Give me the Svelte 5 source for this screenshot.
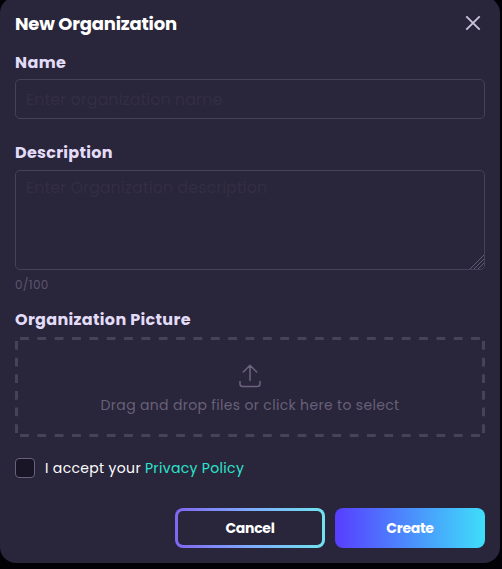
<script>
  let name = $state('');
  let description = $state('');
  let accepted = $state(false);
</script>

<main>
  <form class="modal" onsubmit={(e) => e.preventDefault()}>
    <header>
      <h1>New Organization</h1>
      <button class="close" type="button" aria-label="Close">
        <svg width="16" height="16" viewBox="0 0 16 16"><path d="M1.3 1.3 14.7 14.7M14.7 1.3 1.3 14.7" /></svg>
      </button>
    </header>

    <label class="name-label" for="name">Name</label>
    <input id="name" bind:value={name} placeholder="Enter organization name" />

    <label class="desc-label" for="description">Description</label>
    <div class="area">
      <textarea id="description" bind:value={description} maxlength="100" placeholder="Enter Organization description"></textarea>
      <svg class="grip" width="14" height="14" viewBox="0 0 14 14"><path d="M0 14 14 0M4 14 14 4M8 14 14 8" /></svg>
    </div>
    <div class="count">{description.length}/100</div>

    <h2>Organization Picture</h2>
    <div class="drop">
      <svg class="dashes" width="470" height="100" viewBox="0 0 470 100">
        <path d="M5 1.5H465M5 98.5H465" stroke-dasharray="8.8 8.55" />
        <path d="M1.5 4V96M468.5 4V96" stroke-dasharray="8.8 7.84" />
      </svg>
      <svg class="upload" width="22" height="24" viewBox="0 0 22 24">
        <path d="M11 16.5V1.5M4.3 8 11 1.3 17.7 8M1 17.5V20Q1 22.5 4 22.5H18Q21 22.5 21 20V17.5" />
      </svg>
      <span class="hint">Drag and drop files or click here to select</span>
    </div>

    <div class="accept">
      <input type="checkbox" bind:checked={accepted} aria-label="Accept" />
      <span>I accept your</span>
      <a href="#privacy">Privacy Policy</a>
    </div>

    <footer>
      <button class="cancel" type="button">Cancel</button>
      <button class="create" type="submit">Create</button>
    </footer>
  </form>
</main>

<style>
  :global(body) { background: #020106; }
  main { display: flow-root; height: 569px; overflow: hidden; }
  * { box-sizing: border-box; }
  .modal {
    width: 500px; height: 566px; margin-top: -3px; padding: 14px 15px 15px;
    background: #29253a; border-radius: 16px;
    display: flex; flex-direction: column;
    font-family: Poppins, Inter, "Open Sans", sans-serif; color: #fff;
  }
  header { display: flex; justify-content: space-between; align-items: center; height: 24px; padding-right: 4px; }
  h1, h2 { margin: 0; }
  h1 { font-size: 18px; line-height: 24px; padding-top: 1px; font-weight: 700; letter-spacing: -0.2px; }
  button { font: inherit; color: inherit; border: 0; padding: 0; }
  .close { display: flex; background: none; }
  .close svg { fill: none; stroke: #c9c2dc; stroke-width: 1.9; }
  label, h2 { font-size: 16px; line-height: 24px; font-weight: 700; color: #e3dcf8; white-space: nowrap; height: 24px; }
  .name-label { margin-top: 16px; letter-spacing: 0.4px; }
  .desc-label { margin-top: 22px; letter-spacing: 0.27px; }
  #name, textarea {
    display: block; width: 470px; border: 1px solid #474158; border-radius: 5px;
    background: transparent; color: #fff; font: 16px/24px Poppins, Inter, sans-serif; outline: 0;
  }
  #name { height: 40px; margin-top: 4px; padding: 0 10px; }
  .area { position: relative; margin-top: 5px; height: 100px; }
  textarea { height: 100px; padding: 5px 10px; resize: none; }
  ::placeholder { color: #332e43; opacity: 1; }
  .grip { position: absolute; right: 1px; bottom: 1px; fill: none; stroke: #625b73; stroke-width: 1; }
  .count { font-size: 12px; line-height: 18px; margin-top: 6px; color: #5c556d; letter-spacing: 0.3px; }
  h2 { margin-top: 14px; letter-spacing: 0.32px; }
  .drop { position: relative; height: 100px; margin-top: 5px; display: flex; flex-direction: column; align-items: center; padding-top: 27px; }
  .dashes { position: absolute; inset: 0; fill: none; stroke: #484259; stroke-width: 3; }
  .upload { fill: none; stroke: #6c647f; stroke-width: 1.5; stroke-linecap: round; stroke-linejoin: round; }
  .hint { font-size: 14px; line-height: 22px; margin-top: 6px; color: #686079; white-space: nowrap; letter-spacing: 0.32px; }
  .accept { display: flex; align-items: center; height: 24px; margin-top: 19px; font-size: 14px; white-space: nowrap; letter-spacing: 0.33px; }
  .accept input { appearance: none; width: 20px; height: 20px; margin: 0 10px 0 0; border: 1px solid #69617b; border-radius: 4px; background: #191426; }
  .accept a { color: #2ce5cf; text-decoration: none; margin-left: 4px; }
  footer { display: flex; justify-content: flex-end; gap: 10px; margin-top: 28px; }
  footer button { width: 150px; height: 40px; border-radius: 8px; font-size: 14px; line-height: 20px; font-weight: 700; letter-spacing: -0.3px; }
  .cancel { border: 3px solid transparent; background: linear-gradient(#29253a, #29253a) padding-box, linear-gradient(90deg, #8066f0, #7eacff 50%, #70e4ed) border-box; }
  .create { background: linear-gradient(90deg, #573eff, #3fdefa); }
</style>
